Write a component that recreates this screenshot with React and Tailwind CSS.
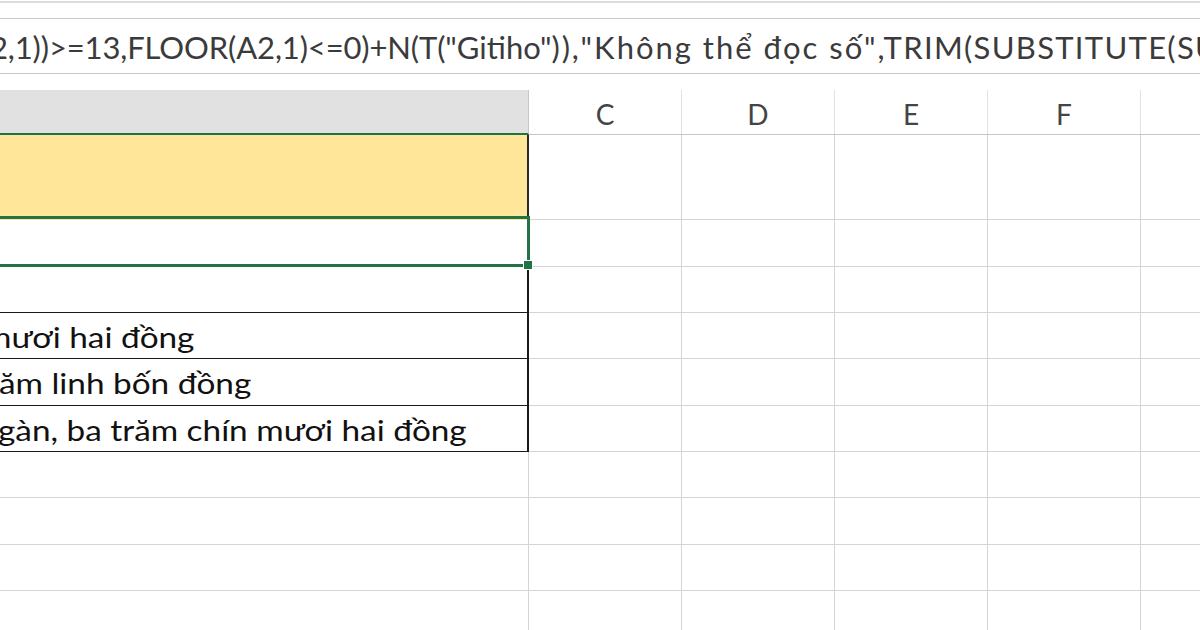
import React from "react";

const FONT = { fontFamily: "Lato, 'Noto Sans', sans-serif" };

function GridCells() {
  return (
    <>
      <div className="w-[153px] h-full shrink-0 border-r border-[#d4d4d4]" />
      <div className="w-[153px] h-full shrink-0 border-r border-[#d4d4d4]" />
      <div className="w-[153px] h-full shrink-0 border-r border-[#d4d4d4]" />
      <div className="w-[153px] h-full shrink-0 border-r border-[#d4d4d4]" />
      <div className="flex-1 h-full" />
    </>
  );
}

function Row({ h, first }) {
  return (
    <div className="flex w-full" style={{ height: h }}>
      {first}
      <div className="flex flex-1 border-b border-[#d4d4d4]">
        <GridCells />
      </div>
    </div>
  );
}

export default function App() {
  const cellText =
    "block shrink-0 origin-left scale-x-[1.19] text-[28px] leading-none text-[#111] whitespace-nowrap";
  return (
    <div className="w-[1200px] h-[630px] overflow-hidden bg-white relative" style={FONT}>
      {/* top strip */}
      <div className="h-[17px] border-t-2 border-[#dcdcdc] mt-px" />
      {/* formula bar */}
      <div className="h-[56px] border-y border-[#c9c9c9] overflow-hidden flex items-center">
        <div className="shrink-0 whitespace-nowrap text-[31px] text-[#3b3b3b] ml-[-10px] mt-[3px]">
          <span className="tracking-[-0.13px]">2,1))&gt;=13,FLOOR(A2,1)&lt;=0)+N(T(</span>
          <span>"Gitiho"</span>
          <span className="tracking-[1.8px]">)),</span>
          <span className="tracking-[2px]">"Không thể đọc số"</span>
          <span className="tracking-[1.3px]">,TRIM(SUBSTITUTE(SUBSTITUTE(</span>
        </div>
      </div>
      <div className="h-[16px]" />
      {/* column header */}
      <div className="flex h-[45px]">
        <div className="w-[529px] shrink-0 bg-[#e1e1e1] border-b-2 border-[#217346] border-r border-r-[#c6c6c6]" />
        <div className="flex flex-1 border-b border-[#c6c6c6] text-[28px] text-[#444] leading-none">
          <div className="w-[153px] shrink-0 border-r border-[#e1e1e1] flex items-center justify-center pt-1">C</div>
          <div className="w-[153px] shrink-0 border-r border-[#e1e1e1] flex items-center justify-center pt-1">D</div>
          <div className="w-[153px] shrink-0 border-r border-[#e1e1e1] flex items-center justify-center pt-1">E</div>
          <div className="w-[153px] shrink-0 border-r border-[#e1e1e1] flex items-center justify-center pt-1">F</div>
          <div className="flex-1" />
        </div>
      </div>

      {/* row 1 - yellow */}
      <Row h={85} first={<div className="w-[529px] shrink-0 bg-[#ffe699] border-r-2 border-[#2a2a2a]" />} />
      {/* row 2 - selected */}
      <Row h={47} first={<div className="w-[529px] shrink-0 border-r-2 border-[#2a2a2a]" />} />
      {/* row 3 */}
      <Row h={46} first={<div className="w-[529px] shrink-0 border-r-2 border-b border-[#1a1a1a]" />} />
      {/* row 4 */}
      <Row
        h={46}
        first={
          <div className="w-[529px] shrink-0 border-r-2 border-b border-[#1a1a1a] overflow-hidden flex items-center">
            <span className={`${cellText} ml-[-16px] mt-[2px]`}>mươi hai đồng</span>
          </div>
        }
      />
      {/* row 5 */}
      <Row
        h={47}
        first={
          <div className="w-[529px] shrink-0 border-r-2 border-b border-[#1a1a1a] overflow-hidden flex items-center">
            <span className={`${cellText} ml-[-1px] mt-[2px]`}>ăm linh bốn đồng</span>
          </div>
        }
      />
      {/* row 6 */}
      <Row
        h={46}
        first={
          <div className="w-[529px] shrink-0 border-r-2 border-b border-[#1a1a1a] overflow-hidden flex items-center">
            <span className={`${cellText} ml-[-2px] mt-[2px]`}>gàn, ba trăm chín mươi hai đồng</span>
          </div>
        }
      />
      {/* rows 7-10 */}
      {[46, 47, 46, 46].map((h, i) => (
        <Row key={i} h={h} first={<div className="w-[529px] shrink-0 border-r border-b border-[#d4d4d4]" />} />
      ))}

      {/* selection overlay */}
      <div className="absolute left-[-4px] top-[216px] w-[534px] h-[51px] border-[3px] border-[#217346] pointer-events-none" />
      <div className="absolute left-[523px] top-[260px] w-[10px] h-[10px] bg-[#217346] border border-white" />
    </div>
  );
}
